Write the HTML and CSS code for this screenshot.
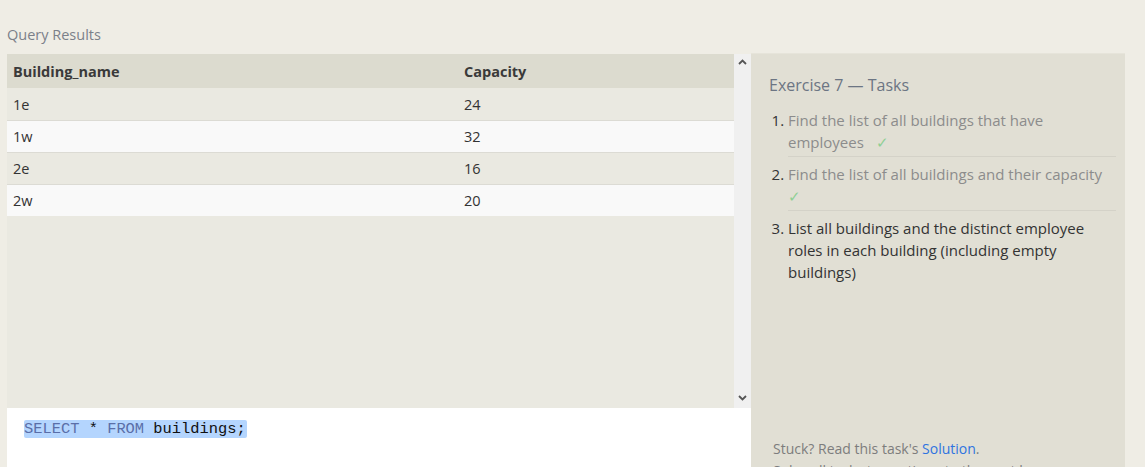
FILE: index.html
```html
<!DOCTYPE html>
<html>
<head>
<meta charset="utf-8">
<link rel="stylesheet" href="styles.css">
</head>
<body>
<div class="page">
  <div class="label">Query Results</div>
  <div class="main">
    <div class="left">
      <div class="results">
        <div class="table-wrap">
          <table class="grid">
            <thead>
              <tr><th class="c1">Building_name</th><th>Capacity</th></tr>
            </thead>
            <tbody>
              <tr><td>1e</td><td>24</td></tr>
              <tr><td>1w</td><td>32</td></tr>
              <tr><td>2e</td><td>16</td></tr>
              <tr><td>2w</td><td>20</td></tr>
            </tbody>
          </table>
        </div>
        <div class="scrollbar">
          <svg class="arrow" width="9" height="6" viewBox="0 0 9 6"><path d="M1 5 L4.5 1.5 L8 5" fill="none" stroke="#555" stroke-width="1.8"/></svg>
          <svg class="arrow" width="9" height="6" viewBox="0 0 9 6"><path d="M1 1 L4.5 4.5 L8 1" fill="none" stroke="#555" stroke-width="1.8"/></svg>
        </div>
      </div>
      <div class="editor">
        <span class="sel"><span class="kw">SELECT</span> * <span class="kw">FROM</span> buildings;</span>
      </div>
    </div>
    <div class="tasks">
      <h2 class="title">Exercise 7 — Tasks</h2>
      <ol class="list">
        <li class="done"><span class="txt">Find the list of all buildings that have employees&nbsp;&nbsp; <span class="check">✓</span></span></li>
        <li class="done"><span class="txt">Find the list of all buildings and their capacity&nbsp;&nbsp; <span class="check">✓</span></span></li>
        <li class="current">List all buildings and the distinct employee roles in each building (including empty buildings)</li>
      </ol>
      <p class="stuck">Stuck? Read this task's <a class="link">Solution</a>.</p>
      <p class="stuck">Solve all tasks to continue to the next lesson.</p>
    </div>
  </div>
</div>
</body>
</html>
```

FILE: styles.css
```css
html, body {
  margin: 0;
  padding: 0;
  background: #efede5;
  font-family: "Open Sans", "Noto Sans", sans-serif;
  color: #333;
  overflow: hidden;
}

.page {
  padding: 25px 20px 0 7px;
}

.label {
  font-size: 14.5px;
  line-height: 20px;
  color: #7b8089;
  margin-bottom: 9px;
}

.main {
  display: flex;
  align-items: stretch;
}

.left {
  width: 744px;
  display: flex;
  flex-direction: column;
}

.results {
  display: flex;
  height: 354px;
  background: #eae9e1;
}

.table-wrap {
  flex: 1;
}

.grid {
  width: 100%;
  border-collapse: collapse;
  font-size: 14.5px;
}

.grid th {
  text-align: left;
  font-weight: 700;
  height: 34px;
  padding: 0 6px;
  background: #dcdbcf;
  color: #3a3a3a;
}

.grid th.c1 {
  width: 439px;
}

.grid td {
  height: 32px;
  padding: 1px 6px 0;
  border-bottom: 1px solid #dcdbd4;
  color: #333;
  box-sizing: border-box;
}

.grid tbody tr:nth-child(odd) td {
  background: #eae9e1;
}

.grid tbody tr:nth-child(even) td {
  background: #f9f9f9;
}

.grid tbody tr:last-child td {
  border-bottom: none;
}

.scrollbar {
  width: 17px;
  background: #f0f0f0;
  display: flex;
  flex-direction: column;
  justify-content: space-between;
  align-items: center;
  padding: 5px 0 7px;
}

.editor {
  background: #fff;
  height: 80px;
  padding: 11px 0 0 17px;
  font-family: "Liberation Mono", "DejaVu Sans Mono", monospace;
  font-size: 15.4px;
  line-height: 20px;
  color: #111;
}

.sel {
  background: #b4d5fe;
  border-radius: 2px;
  padding: 0 1px 0 0;
}

.kw {
  color: #5a6ea8;
}

.tasks {
  width: 356px;
  background: #e1dfd4;
  border-top: 1px solid #e6e4da;
  margin-top: -1px;
  padding: 20px 0 0 18px;
}

.title {
  margin: 0 0 13px;
  font-size: 16px;
  font-weight: 400;
  line-height: 22px;
  color: #6c7583;
}

.list {
  margin: 0;
  padding: 0 0 0 19px;
  font-size: 15px;
  line-height: 22px;
  color: #333;
}

.list li {
  width: 328px;
}

.list li.done {
  border-bottom: 1px solid #d4d2c8;
  margin-bottom: 6px;
  padding-bottom: 3px;
}

.list li.done .txt {
  color: #8c8c8c;
}

.check {
  color: #8fcf94;
}

.stuck {
  margin: 155px 0 0 4px;
  font-size: 14px;
  line-height: 22px;
  color: #7d7d7d;
}

.stuck + .stuck {
  margin-top: 0;
}

.link {
  color: #2f74e0;
}
```
